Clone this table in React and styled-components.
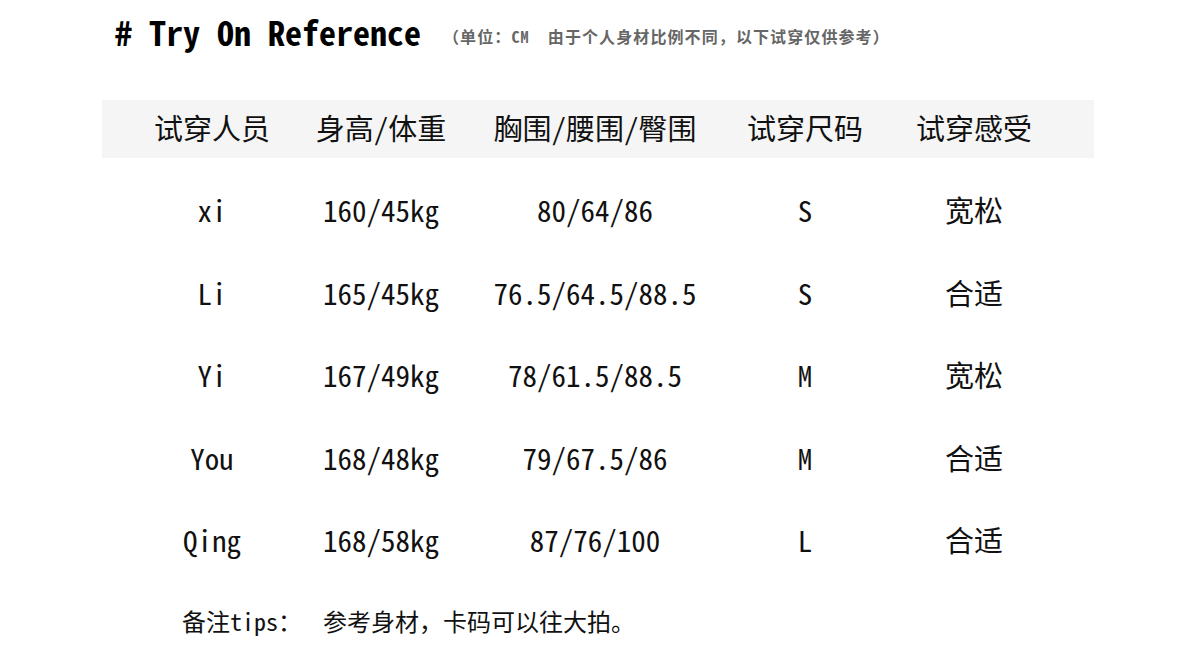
import React from "react";
import styled, { createGlobalStyle } from "styled-components";

const Global = createGlobalStyle`
  html, body { margin: 0; padding: 0; background: #fff; }
  body {
    font-family: "Noto Sans CJK SC", "Noto Sans", sans-serif;
    color: #111;
  }
`;

const Half = styled.span`
  font-feature-settings: "hwid" 1;
`;

const Page = styled.div`
  width: 1200px;
  height: 671px;
  box-sizing: border-box;
  padding: 10px 0 0 102px;
  overflow: hidden;
`;

const TitleRow = styled.div`
  display: flex;
  align-items: baseline;
  padding-left: 13px;
  height: 44px;
`;

const Title = styled.h1`
  margin: 0;
  font-size: 34px;
  line-height: 44px;
  font-weight: 700;
  color: #000;
  white-space: pre;
  font-feature-settings: "hwid" 1;
`;

const Note = styled.span`
  margin-left: 22px;
  position: relative;
  top: -3px;
  font-size: 16px;
  letter-spacing: 1.1px;
  font-weight: 700;
  color: #666;
  white-space: pre;
`;

const Table = styled.div`
  margin-top: 46px;
  width: 992px;
`;

const Row = styled.div`
  display: grid;
  grid-template-columns: 220px 118px 310px 110px 228px 6px;
  align-items: center;
  height: ${(p) => (p.$head ? "58px" : "82.5px")};
  background: ${(p) => (p.$head ? "#f5f5f5" : "transparent")};
`;

const Body = styled.div`
  padding-top: 12px;
`;

const Cell = styled.div`
  display: flex;
  justify-content: center;
  font-size: 29px;
  line-height: 36px;
  padding-bottom: 4px;
  white-space: pre;
  font-weight: 400;
  color: #111;
  font-feature-settings: "hwid" 1;
`;

const Footnote = styled.p`
  margin: 22px 0 0 80px;
  font-size: 24px;
  line-height: 32px;
  color: #111;
  white-space: pre;
`;

const Gap = styled.span`
  display: inline-block;
  width: 21px;
`;

const header = ["试穿人员", "身高/体重", "胸围/腰围/臀围", "试穿尺码", "试穿感受"];
const rows = [
  ["xi", "160/45kg", "80/64/86", "S", "宽松"],
  ["Li", "165/45kg", "76.5/64.5/88.5", "S", "合适"],
  ["Yi", "167/49kg", "78/61.5/88.5", "M", "宽松"],
  ["You", "168/48kg", "79/67.5/86", "M", "合适"],
  ["Qing", "168/58kg", "87/76/100", "L", "合适"],
];

export default function App() {
  return (
    <>
      <Global />
      <Page>
        <TitleRow>
          <Title># Try On Reference</Title>
          <Note>
            （单位：<Half>CM  </Half>由于个人身材比例不同，以下试穿仅供参考）
          </Note>
        </TitleRow>
        <Table>
          <Row $head>
            {header.map((h) => (
              <Cell key={h}>{h}</Cell>
            ))}
          </Row>
          <Body>
            {rows.map((r) => (
              <Row key={r[0]}>
                {r.map((c, i) => (
                  <Cell key={i}>{c}</Cell>
                ))}
              </Row>
            ))}
          </Body>
        </Table>
        <Footnote>
          备注<Half>tips</Half>：<Gap />参考身材，卡码可以往大拍。
        </Footnote>
      </Page>
    </>
  );
}
